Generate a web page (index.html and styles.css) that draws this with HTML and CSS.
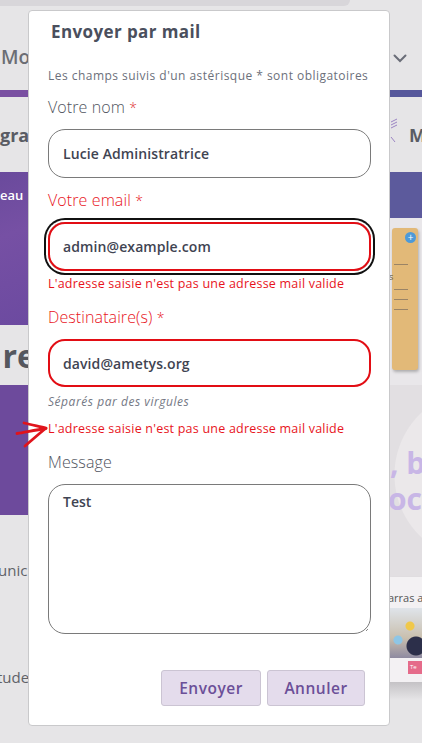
FILE: index.html
```html
<!DOCTYPE html>
<html lang="fr">
<head>
<meta charset="utf-8">
<title>Envoyer par mail</title>
<link rel="stylesheet" href="styles.css">
</head>
<body>
<div class="page">
  <div class="col col-left">
    <div class="l-top"></div>
    <div class="l-head"><span class="logo">Mo</span></div>
    <div class="l-stripe"></div>
    <div class="l-nav"><span>gra</span></div>
    <div class="l-hero"><span>eau</span></div>
    <div class="l-title"><span>re</span></div>
    <div class="l-block"></div>
    <div class="l-text">
      <span class="t1">unic</span>
      <span class="t2">tude</span>
    </div>
  </div>
  <div class="col col-mid">
    <div class="m-top"></div>
  </div>
  <div class="col col-right">
    <div class="r-top"></div>
    <div class="r-head">
      <svg width="14" height="9" viewBox="0 0 14 9"><path d="M1.5 1.5 L7 7 L12.5 1.5" fill="none" stroke="#6a6d78" stroke-width="2" stroke-linecap="round"/></svg>
    </div>
    <div class="r-stripe"></div>
    <div class="r-nav">
      <svg class="hand" width="10" height="26" viewBox="0 0 10 26"><path d="M2 4 L8 1 M2 7 L8 4 M2 10 L8 7 M2 19 L6 24" stroke="#9b84c3" stroke-width="1" fill="none"/></svg>
      <span>M</span>
    </div>
    <div class="r-band"></div>
    <div class="r-cardzone">
      <div class="card">
        <span class="plus">+</span>
        <i class="ln l1"></i><span class="cs">s</span><i class="ln l2"></i><i class="ln l3"></i><i class="ln l4"></i>
      </div>
    </div>
    <div class="r-circle">
      <span class="big1">, b</span>
      <span class="big2">oci</span>
    </div>
    <div class="r-img">
      <span class="cap">arras a</span>
      <div class="pic"></div>
      <span class="btn-pink">Te</span>
    </div>
    <div class="r-shadow"></div>
  </div>
</div>

<div class="modal">
  <h2 class="modal-title">Envoyer par mail</h2>
  <p class="note">Les champs suivis d'un astérisque * sont obligatoires</p>

  <div class="field">
    <label class="label">Votre nom <span class="star">*</span></label>
    <div class="input">Lucie Administratrice</div>
  </div>

  <div class="field error field-email">
    <label class="label">Votre email <span class="star">*</span></label>
    <div class="input focus">admin@example.com</div>
    <p class="err">L'adresse saisie n'est pas une adresse mail valide</p>
  </div>

  <div class="field error field-dest">
    <label class="label">Destinataire(s) <span class="star">*</span></label>
    <div class="input">david@ametys.org</div>
    <p class="hint">Séparés par des virgules</p>
    <p class="err err2">L'adresse saisie n'est pas une adresse mail valide</p>
  </div>

  <div class="field">
    <label class="label">Message</label>
    <div class="textarea">Test
      <svg class="grip" width="8" height="8" viewBox="0 0 8 8"><path d="M7 2 L2 7 M7 5 L5 7" stroke="#888" stroke-width="1"/></svg>
    </div>
  </div>

  <div class="actions">
    <button class="btn">Envoyer</button>
    <button class="btn">Annuler</button>
  </div>
</div>

<svg class="annot" width="36" height="32" viewBox="0 0 36 32">
  <path d="M3 15.5 C12 14 22 12 32 10.5" stroke="#e0141c" stroke-width="2.8" fill="none" stroke-linecap="round"/>
  <path d="M10 5 C18 7 26 8.5 32 10 C26 15 18 22 11 28" stroke="#e0141c" stroke-width="2.8" fill="none" stroke-linecap="round" stroke-linejoin="round"/>
</svg>
</body>
</html>
```

FILE: styles.css
```css
* { box-sizing: border-box; }
html, body { margin: 0; padding: 0; }
body {
  width: 422px;
  height: 743px;
  overflow: hidden;
  background: #e6e5e7;
  font-family: "Open Sans", "DejaVu Sans", sans-serif;
  position: relative;
}

/* ---------- background page ---------- */
.page {
  display: flex;
  height: 743px;
}
.col { display: flex; flex-direction: column; }
.col-left { width: 28px; flex: none; overflow: visible; }
.col-mid { flex: 1; }
.col-right { width: 32px; flex: none; overflow: hidden; }

.l-top, .m-top { height: 6px; background: #d8d6da; flex: none; }
.m-top { width: 322px; border-bottom-right-radius: 6px; }
.r-top { height: 6px; flex: none; }

.l-head {
  height: 84px; flex: none;
  display: flex; align-items: center; padding-top: 18px;
}
.logo { font-size: 19px; font-weight: 600; color: #6b6d74; white-space: nowrap; padding-left: 1px; }

.l-stripe { height: 7px; background: #7a50a2; flex: none; }
.r-stripe { height: 7px; background: #56579b; flex: none; }

.l-nav {
  height: 75px; flex: none;
  display: flex; align-items: center; padding-top: 0;
  font-size: 18px; font-weight: 700; color: #5a5c64; white-space: nowrap;
}

.l-hero {
  height: 153px; flex: none;
  background: linear-gradient(160deg, #6a4a9c 0%, #7650a4 40%, #6c4aa0 100%);
  color: #fff; font-size: 13px; font-weight: 600;
  padding-top: 14px; white-space: nowrap;
}

.l-title {
  height: 60px; flex: none;
  display: flex; align-items: center; justify-content: flex-end;
  overflow: hidden;
}
.l-title span { font-size: 32px; font-weight: 700; color: #55575e; margin-right: -8px; }

.l-block { height: 130px; flex: none; background: #6d4a9c; }

.l-text { flex: 1; display: flex; flex-direction: column; font-size: 15px; color: #606268; overflow: hidden; }
.l-text .t1 { margin-top: 45px; margin-left: -2px; }
.l-text .t2 { margin-top: 87px; margin-left: -3px; }

.r-head {
  height: 84px; flex: none;
  display: flex; align-items: center; padding-left: 3px; padding-top: 20px;
}
.r-nav {
  height: 75px; flex: none;
  display: flex; align-items: center; gap: 10px; padding-top: 0px;
  font-size: 18px; font-weight: 700; color: #5a5c64;
}
.r-nav span { flex: none; }
.hand { flex: none; margin-top: -8px; margin-left: -1px; }

.r-band { height: 46px; flex: none; background: #5c5a9c; }

.r-cardzone {
  height: 167px; flex: none;
  padding: 10px 4px 0 2px;
  background: #e9e7ea;
}
.card {
  position: relative;
  height: 142px;
  background: #e2b978;
  border-radius: 3px;
  box-shadow: 1px 2px 3px rgba(0,0,0,0.25);
  display: flex; flex-direction: column; padding-top: 36px; gap: 9px;
}
.card .plus {
  position: absolute; right: 2px; top: 4px;
  width: 11px; height: 11px; border-radius: 50%;
  background: #4d9ad8; color: #fff; font-size: 10px; line-height: 11px; text-align: center;
}
.card .ln { display: block; height: 1px; width: 14px; background: #9a8466; margin-left: 2px; }
.card .cs { font-size: 9px; color: #6a5840; line-height: 6px; margin-left: -3px; }

.r-circle {
  height: 192px; flex: none;
  background: radial-gradient(circle at 90px 90px, #ebe8ea 0 85px, #e2dfe2 86px);
  display: flex; flex-direction: column; padding-top: 60px;
  font-size: 30px; font-weight: 700; color: #c8b6e6; white-space: nowrap;
  line-height: 36px;
}
.big1 { margin-left: 0; }
.big2 { margin-left: -2px; }

.r-img {
  height: 105px; flex: none;
  background: #f3f1f3;
  display: flex; flex-direction: column; padding-top: 15px;
  white-space: nowrap;
  box-shadow: 0 3px 4px rgba(0,0,0,0.2);
}
.cap { font-size: 11px; color: #555; margin-left: -2px; line-height: 12px; }
.pic {
  height: 50px; margin-top: 4px;
  background:
    radial-gradient(circle at 20px 18px, #f0c84a 0 4px, transparent 5px),
    radial-gradient(circle at 8px 32px, #8ec6e6 0 4px, transparent 5px),
    radial-gradient(circle at 26px 38px, #2c2f4a 0 9px, transparent 10px),
    linear-gradient(180deg, #dfe4ea 0%, #c9bfae 60%, #8e8aa0 100%);
}
.btn-pink {
  margin: 3px 0 0 18px; height: 13px; width: 20px;
  background: #e56b8a; color: #fff; font-size: 6px; line-height: 13px; padding-left: 2px;
}
.r-shadow { height: 18px; flex: none; background: linear-gradient(#c4c2c5, #e6e5e7); }

/* ---------- modal ---------- */
.modal {
  position: absolute;
  left: 28px; top: 10px;
  width: 362px; height: 716px;
  background: #fff;
  border: 1px solid #c9c9cb;
  border-radius: 4px;
  padding: 0 18px 0 19px;
  display: flex; flex-direction: column;
  color: #5a5e69;
}
.modal-title {
  margin: 9px 0 0 3px;
  font-size: 17px; font-weight: 700; color: #4a4f5d;
  line-height: 24px;
  letter-spacing: 0.4px;
}
.note {
  margin: 24px 0 0;
  font-size: 12px; line-height: 16px; color: #6c707b;
  letter-spacing: 0.47px;
}
.field { display: flex; flex-direction: column; }
.label {
  font-size: 16px; line-height: 22px; color: #50545e; font-weight: 300;
  margin-top: 12px;
  letter-spacing: 0.1px;
}
.star { color: #e03232; font-size: 14px; }
.error .label { color: #e8141c; }
.error .star { color: #e8141c; }
.field-email .label { margin-top: 11px; }

.input {
  margin-top: 10px;
  height: 49px;
  border: 1px solid #7a7a7a;
  border-radius: 17px;
  padding: 0 14px;
  display: flex; align-items: center;
  font-size: 14px; font-weight: 600; color: #3f4452;
  letter-spacing: 0.1px;
}
.error .input {
  border: 2px solid #e20d14;
  padding: 0 13px;
}
.field-dest .input { height: 48px; }
.error .input.focus {
  box-shadow: 0 0 0 2px #fff, 0 0 0 4px #111;
}
.err {
  margin: 5px 0 2px;
  font-size: 12.5px; line-height: 16px; color: #e8141c;
  letter-spacing: 0.22px;
}
.hint {
  margin: 7px 0 0;
  font-size: 12px; line-height: 16px; font-style: italic; color: #747884;
  letter-spacing: 0.55px;
}
.err2 { margin-top: 11px; margin-bottom: 2px; }

.textarea {
  position: relative;
  margin-top: 11px;
  height: 150px;
  border: 1px solid #7a7a7a;
  border-radius: 17px;
  padding: 7px 14px;
  font-size: 14px; font-weight: 600; color: #3f4452;
}
.grip { position: absolute; right: 1px; bottom: 1px; }

.actions {
  margin-top: 36px;
  display: flex; justify-content: flex-end; gap: 6px;
  padding-right: 6px;
}
.btn {
  height: 36px;
  background: #e4dcec;
  border: 1px solid #cbc4d3;
  border-radius: 3px;
  font-family: inherit;
  font-size: 15.5px; font-weight: 600; color: #6b4f98;
  letter-spacing: 0.5px;
  padding: 0;
}
.btn:first-child { width: 100px; }
.btn:last-child { width: 98px; }

.annot {
  position: absolute;
  left: 14px; top: 418px;
}
```
